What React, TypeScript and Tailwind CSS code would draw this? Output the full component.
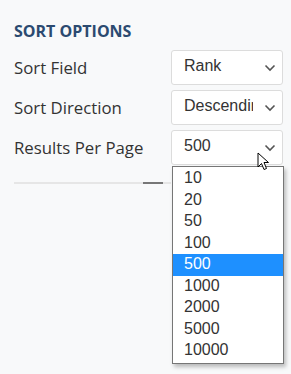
import React from "react";

const options = ["10", "20", "50", "100", "500", "1000", "2000", "5000", "10000"];

function Chevron() {
  return (
    <svg width="12" height="8" viewBox="0 0 12 8" className="text-[#555] shrink-0">
      <path d="M1.5 1.5 L6 6 L10.5 1.5" fill="none" stroke="currentColor" strokeWidth="1.6" />
    </svg>
  );
}

function SelectBox({ value }: { value: string }) {
  return (
    <div className="w-[112px] h-[35px] bg-white border border-[#dcdcdc] rounded-[3px] flex items-center justify-between pl-3 pr-[6px] font-['Liberation_Sans',Arial,sans-serif] text-[16px] text-[#333]">
      <span className="w-[69px] overflow-hidden whitespace-nowrap -mt-[3px]">{value}</span>
      <Chevron />
    </div>
  );
}

export default function App() {
  return (
    <div className="w-[291px] h-[374px] bg-[#f8f9fa] pl-[14px] pr-[8px] pt-[20px] font-['Open_Sans',sans-serif] relative overflow-hidden">
      <h3 className="text-[16px] font-bold text-[#2b4a70] leading-[22px] mb-[8px]">
        SORT OPTIONS
      </h3>
      <div className="flex flex-col gap-[5px]">
        <div className="flex items-center justify-between">
          <span className="text-[16.8px] text-[#333]">Sort Field</span>
          <SelectBox value="Rank" />
        </div>
        <div className="flex items-center justify-between">
          <span className="text-[16.8px] text-[#333]">Sort Direction</span>
          <SelectBox value="Descending" />
        </div>
        <div className="flex items-center justify-between relative">
          <span className="text-[16.8px] text-[#333]">Results Per Page</span>
          <SelectBox value="500" />
          <div className="absolute right-[-1px] top-[36px] w-[112px] bg-white border border-[#767676] shadow-[2px_3px_4px_rgba(0,0,0,0.25)] z-10 font-['Liberation_Sans',Arial,sans-serif] text-[16px] text-[#333] py-[1px]">
            {options.map((o) => (
              <div
                key={o}
                className={
                  o === "500"
                    ? "h-[21.5px] leading-[20px] pl-[11px] bg-[#1e90ff] text-white"
                    : "h-[21.5px] leading-[20px] pl-[11px]"
                }
              >
                {o}
              </div>
            ))}
          </div>
          <svg
            width="13"
            height="20"
            viewBox="0 0 13 20"
            className="absolute left-[243px] top-[22px] z-20"
          >
            <path
              d="M1 1 L1 15 L4.5 11.5 L7 17.5 L9.5 16.5 L7 10.5 L11.5 10.5 Z"
              fill="white"
              stroke="black"
              strokeWidth="1"
              strokeLinejoin="round"
            />
          </svg>
        </div>
      </div>
      <div className="mt-[17px] w-[157px] h-[2px] bg-[#e6e6e6] relative">
        <div className="absolute left-[129px] top-0 w-[20px] h-[2px] bg-[#777]" />
      </div>
    </div>
  );
}
